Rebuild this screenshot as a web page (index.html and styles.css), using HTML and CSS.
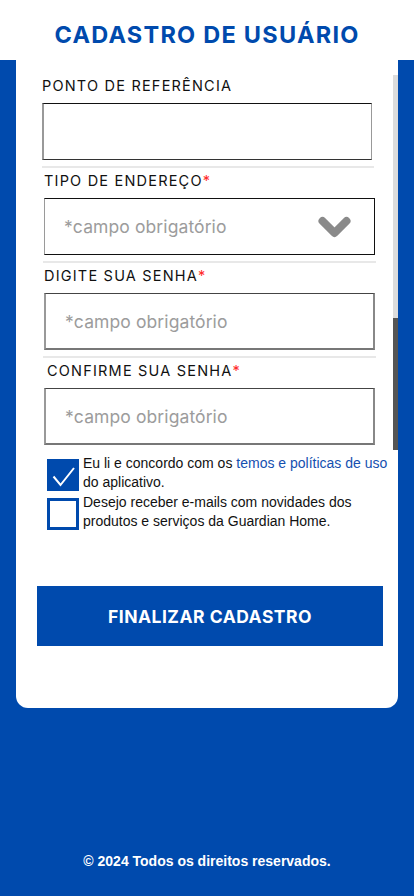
FILE: index.html
```html
<!DOCTYPE html>
<html lang="pt-BR">
<head>
<meta charset="utf-8">
<title>Cadastro de Usuário</title>
<link rel="stylesheet" href="styles.css">
</head>
<body>
<header class="topbar">
  <h1 class="title">CADASTRO DE USUÁRIO</h1>
</header>
<main class="card">
  <div class="fields">
    <div class="field field-first">
      <label class="label">PONTO DE REFERÊNCIA</label>
      <div class="box box-first"></div>
    </div>
    <div class="sep sep-first"></div>
    <div class="field">
      <label class="label">TIPO DE ENDEREÇO<span class="req">*</span></label>
      <div class="box box-select">
        <span class="ph">*campo obrigatório</span>
        <svg class="chev" width="33" height="23" viewBox="0 0 33 23"><polyline points="4.5,5 16.5,17 28.5,5" fill="none" stroke="#8a8a8a" stroke-width="8" stroke-linecap="round" stroke-linejoin="round"/></svg>
      </div>
    </div>
    <div class="sep"></div>
    <div class="field">
      <label class="label">DIGITE SUA SENHA<span class="req">*</span></label>
      <div class="box box-gray"><span class="ph">*campo obrigatório</span></div>
    </div>
    <div class="sep"></div>
    <div class="field field-last">
      <label class="label label-shift">CONFIRME SUA SENHA<span class="req">*</span></label>
      <div class="box box-gray"><span class="ph">*campo obrigatório</span></div>
    </div>
  </div>
  <div class="scrollbar"><div class="thumb"></div></div>

  <div class="checks">
    <div class="check">
      <span class="cb cb-on"><svg width="26" height="26" viewBox="0 0 26 26"><polyline points="4.5,14.5 11.5,23 25,6" fill="none" stroke="#fff" stroke-width="2"/></svg></span>
      <p class="check-text">Eu li e concordo com os <a class="link">temos e políticas de uso</a> do aplicativo.</p>
    </div>
    <div class="check">
      <span class="cb cb-off"></span>
      <p class="check-text">Desejo receber e-mails com novidades dos produtos e serviços da Guardian Home.</p>
    </div>
  </div>

  <button class="btn">FINALIZAR CADASTRO</button>
</main>
<footer class="footer">© 2024 Todos os direitos reservados.</footer>
</body>
</html>
```
FILE: styles.css
```css
* { box-sizing: border-box; }
html, body { margin: 0; padding: 0; }
body {
  width: 414px;
  height: 896px;
  background: #004aad;
  font-family: Inter, "Liberation Sans", sans-serif;
  overflow: hidden;
}
.topbar {
  height: 60px;
  background: #fff;
  display: flex;
  align-items: center;
  justify-content: center;
}
.title {
  margin: 8px 0 0 0;
  font-family: Inter, sans-serif;
  font-weight: 700;
  font-size: 23.5px;
  letter-spacing: 1.25px;
  color: #004aad;
}
.card {
  position: relative;
  margin: 0 16px;
  height: 648px;
  background: #fff;
  border-radius: 0 0 12px 12px;
  padding-top: 16px;
}
.fields {
  padding: 0 23px 0 28px;
}
.field { display: flex; flex-direction: column; }
.field-first { margin: 0 3px 0 -2px; }
.label {
  display: block;
  height: 20px;
  line-height: 20px;
  font-size: 14.5px;
  font-weight: 400;
  letter-spacing: 1.2px;
  color: #111;
  margin-bottom: 7px;
}
.label-shift { padding-left: 3px; }
.req { color: #ff2b2b; letter-spacing: 0; }
.box {
  height: 57px;
  border: 1px solid #111;
  border-left: 1px solid #9a9a9a;
  display: flex;
  align-items: center;
  justify-content: space-between;
  padding: 0 23px 0 19px;
  background: #fff;
}
.box-first { border-left: 2px solid #999; border-right-color: #999; border-bottom-color: #333; }
.box-gray { border-color: #444 #888 #777 #999; border-width: 1px 2px 2px 2px; }
.ph {
  font-size: 17.5px;
  font-weight: 400;
  color: #9c9c9c;
  letter-spacing: 0.1px;
}
.chev { display: block; margin-top: 2px; }
.sep {
  height: 2px;
  background: #e8e8e8;
  margin: 6px -1px 3px -1px;
}
.sep-first { margin-left: -2px; margin-right: 1px; }
.scrollbar {
  position: absolute;
  right: 0;
  top: 15px;
  width: 5px;
  height: 375px;
  background: #dcdcdc;
}
.thumb {
  position: absolute;
  left: 0;
  right: 0;
  top: 243px;
  bottom: 0;
  background: #555;
}
.checks {
  margin: 9px 8px 0 31px;
  display: flex;
  flex-direction: column;
  gap: 1px;
}
.check {
  display: flex;
  align-items: flex-start;
  gap: 4px;
}
.cb {
  flex: none;
  width: 32px;
  height: 32px;
  margin-top: 4.5px;
  display: flex;
  align-items: flex-start;
  justify-content: flex-start;
}
.cb-on { background: #004aad; padding: 3px 0 0 2px; }
.cb-off { border: 3px solid #004aad; background: #fff; }
.check-text {
  margin: 0;
  font-family: "Liberation Sans", Arial, sans-serif;
  font-size: 14px;
  line-height: 19px;
  color: #111;
}
.link { color: #1550b0; }
.btn {
  display: flex;
  align-items: center;
  justify-content: center;
  margin: 55px 0 0 21px;
  width: 346px;
  height: 60px;
  border: 0;
  background: #004aad;
  color: #fff;
  font-family: Inter, sans-serif;
  font-weight: 700;
  font-size: 17.5px;
  letter-spacing: 0.5px;
  padding: 0;
}
.footer {
  margin-top: 144px;
  text-align: center;
  color: #fff;
  font-family: "Liberation Sans", Arial, sans-serif;
  font-weight: 700;
  font-size: 14px;
  line-height: 18px;
}
```
